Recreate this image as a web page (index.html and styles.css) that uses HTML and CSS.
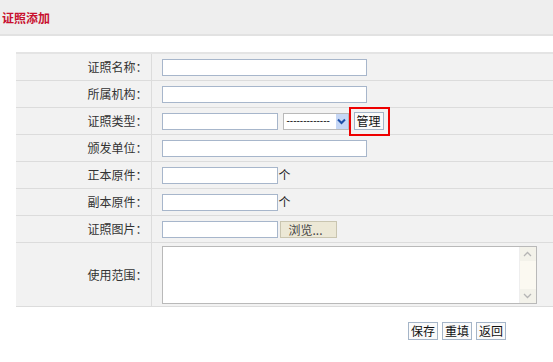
FILE: index.html
```html
<!DOCTYPE html>
<html lang="zh">
<head>
<meta charset="utf-8">
<link rel="stylesheet" href="styles.css">
</head>
<body>
<div class="header"><span class="title">证照添加</span></div>
<table class="form">
  <tr><th>证照名称：</th><td><input class="txt" type="text"></td></tr>
  <tr><th>所属机构：</th><td><input class="txt" type="text"></td></tr>
  <tr><th>证照类型：</th><td><div class="line"><input class="txt short" type="text"><div class="sel"><span class="dash">-------------</span><span class="arrow"><svg width="9" height="7" viewBox="0 0 9 7"><path d="M1 1.5 L4.5 5 L8 1.5" fill="none" stroke="#1d4fa8" stroke-width="2"/></svg></span></div><span class="mark"><button class="btn">管理</button></span></div></td></tr>
  <tr><th>颁发单位：</th><td><input class="txt" type="text"></td></tr>
  <tr><th>正本原件：</th><td><div class="line"><input class="txt short" type="text"><span class="unit">个</span></div></td></tr>
  <tr><th>副本原件：</th><td><div class="line"><input class="txt short" type="text"><span class="unit">个</span></div></td></tr>
  <tr><th>证照图片：</th><td><div class="line"><input class="txt short" type="text"><span class="browse">浏览...</span></div></td></tr>
  <tr class="tall"><th>使用范围：</th><td><div class="area"><div class="sb"><span class="up"><svg width="9" height="6" viewBox="0 0 9 6"><path d="M1 5 L4.5 1.5 L8 5" fill="none" stroke="#b5b5b5" stroke-width="1.3"/></svg></span><span class="down"><svg width="9" height="6" viewBox="0 0 9 6"><path d="M1 1 L4.5 4.5 L8 1" fill="none" stroke="#b5b5b5" stroke-width="1.3"/></svg></span></div></div></td></tr>
</table>
<div class="actions"><button class="btn">保存</button><button class="btn">重填</button><button class="btn">返回</button></div>
</body>
</html>
```

FILE: styles.css
```css
html, body { margin: 0; padding: 0; background: #fff; }
body { font-family: "Noto Sans CJK SC", "Liberation Sans", sans-serif; font-size: 12px; color: #222; width: 553px; height: 362px; overflow: hidden; }
.header { height: 34px; background: #eeeeee; border-bottom: 2px solid #e2e2e2; display: flex; align-items: center; padding-left: 2px; }
.title { color: #c8102e; font-weight: bold; font-size: 12px; margin-top: 1px; }
.form { margin: 16px 0 0 16px; width: 537px; border-collapse: collapse; background: #f2f2f2; border-top: 2px solid #e4e4e4; }
.form th, .form td { border-bottom: 1px solid #dcdcdc; height: 26px; padding: 0; line-height: 16px; }
.form th { width: 135px; text-align: right; font-weight: normal; padding-right: 3px; color: #333; border-right: 1px solid #dcdcdc; box-sizing: border-box; }
.form td { padding-left: 10px; }
.form tr.tall th, .form tr.tall td { height: 63px; }
.txt { display: block; width: 205px; height: 17px; box-sizing: border-box; border: 1px solid #a7b6cb; background: #fff; margin: 0; padding: 0; }
.txt.short { width: 116px; }
.line { display: flex; align-items: center; }
.unit { margin-left: 1px; font-size: 12px; }
.sel { display: flex; align-items: center; margin-left: 5px; width: 66px; height: 17px; border: 1px solid #b9b9b9; background: #fff; box-sizing: border-box; position: relative; }
.dash { font-family: "Liberation Sans", sans-serif; font-size: 10px; padding-left: 3px; color: #222; line-height: 1; }
.arrow { position: absolute; right: 0; top: 0; width: 12px; height: 15px; background: #c6d7f5; display: flex; align-items: center; justify-content: center; }
.mark { border: 2px solid #ee0000; padding: 3px 4px 4px 3px; margin: -4px 0 -5px 0; display: flex; }
.btn { font-family: inherit; font-size: 12px; color: #111; background: #fafafa; border: 1px solid #a5b5c8; padding: 0 2px; height: 18px; line-height: 16px; margin: 0; cursor: pointer; }
.browse { margin-left: 2px; width: 57px; height: 17px; background: #ece8d6; border: 1px solid #c9c5b0; box-sizing: border-box; font-size: 12px; line-height: 15px; padding-left: 8px; color: #444; }
.area { width: 375px; height: 58px; border: 1px solid #b9b9b9; background: #fff; box-sizing: border-box; display: flex; justify-content: flex-end; }
.sb { width: 16px; background: #fbf9f1; border-left: 1px solid #eee; display: flex; flex-direction: column; justify-content: space-between; }
.up, .down { height: 14px; background: #f3f2ea; display: flex; align-items: center; justify-content: center; }
.actions { display: flex; justify-content: flex-end; gap: 4px; padding-right: 47px; margin-top: 15px; }
```
